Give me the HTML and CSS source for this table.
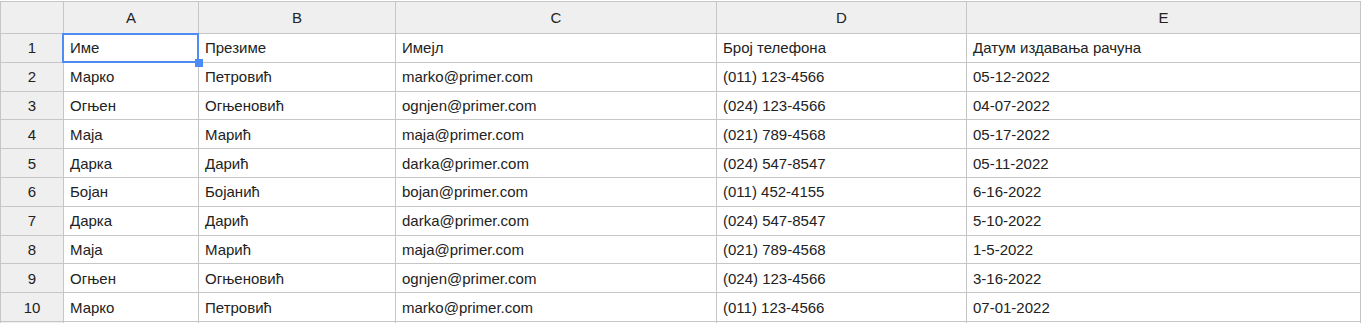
FILE: index.html
```html
<!DOCTYPE html>
<html lang="sr">
<head>
<meta charset="utf-8">
<title>Sheet</title>
<link rel="stylesheet" href="styles.css">
</head>
<body>
<div class="sheet">
  <div class="corner"></div>
  <div class="colhead">A</div>
  <div class="colhead">B</div>
  <div class="colhead">C</div>
  <div class="colhead">D</div>
  <div class="colhead">E</div>

  <div class="rowhead">1</div>
  <div class="cell selected">Име<span class="handle"></span></div>
  <div class="cell">Презиме</div>
  <div class="cell">Имејл</div>
  <div class="cell">Број телефона</div>
  <div class="cell">Датум издавања рачуна</div>

  <div class="rowhead">2</div>
  <div class="cell">Марко</div>
  <div class="cell">Петровић</div>
  <div class="cell">marko@primer.com</div>
  <div class="cell">(011) 123-4566</div>
  <div class="cell">05-12-2022</div>

  <div class="rowhead">3</div>
  <div class="cell">Огњен</div>
  <div class="cell">Огњеновић</div>
  <div class="cell">ognjen@primer.com</div>
  <div class="cell">(024) 123-4566</div>
  <div class="cell">04-07-2022</div>

  <div class="rowhead">4</div>
  <div class="cell">Маја</div>
  <div class="cell">Марић</div>
  <div class="cell">maja@primer.com</div>
  <div class="cell">(021) 789-4568</div>
  <div class="cell">05-17-2022</div>

  <div class="rowhead">5</div>
  <div class="cell">Дарка</div>
  <div class="cell">Дарић</div>
  <div class="cell">darka@primer.com</div>
  <div class="cell">(024) 547-8547</div>
  <div class="cell">05-11-2022</div>

  <div class="rowhead">6</div>
  <div class="cell">Бојан</div>
  <div class="cell">Бојанић</div>
  <div class="cell">bojan@primer.com</div>
  <div class="cell">(011) 452-4155</div>
  <div class="cell">6-16-2022</div>

  <div class="rowhead">7</div>
  <div class="cell">Дарка</div>
  <div class="cell">Дарић</div>
  <div class="cell">darka@primer.com</div>
  <div class="cell">(024) 547-8547</div>
  <div class="cell">5-10-2022</div>

  <div class="rowhead">8</div>
  <div class="cell">Маја</div>
  <div class="cell">Марић</div>
  <div class="cell">maja@primer.com</div>
  <div class="cell">(021) 789-4568</div>
  <div class="cell">1-5-2022</div>

  <div class="rowhead">9</div>
  <div class="cell">Огњен</div>
  <div class="cell">Огњеновић</div>
  <div class="cell">ognjen@primer.com</div>
  <div class="cell">(024) 123-4566</div>
  <div class="cell">3-16-2022</div>

  <div class="rowhead">10</div>
  <div class="cell">Марко</div>
  <div class="cell">Петровић</div>
  <div class="cell">marko@primer.com</div>
  <div class="cell">(011) 123-4566</div>
  <div class="cell">07-01-2022</div>

  <div class="rowhead"></div>
  <div class="cell"></div>
  <div class="cell"></div>
  <div class="cell"></div>
  <div class="cell"></div>
  <div class="cell"></div>
</div>
</body>
</html>
```

FILE: styles.css
```css
html, body {
  margin: 0;
  padding: 0;
  background: #ffffff;
  overflow: hidden;
}

body {
  padding-top: 1px;
  font-family: "Liberation Sans", Arial, sans-serif;
  font-size: 15px;
  color: #222222;
}

.sheet {
  display: grid;
  grid-template-columns: 63px 135px 197px 321px 250px 394px;
  grid-template-rows: 32px repeat(11, 28.8px);
  border-top: 1px solid #c6c6c6;
  border-left: 1px solid #c6c6c6;
  width: max-content;
}

.corner,
.colhead,
.rowhead,
.cell {
  box-sizing: border-box;
  border-right: 1px solid #c6c6c6;
  border-bottom: 1px solid #c6c6c6;
  white-space: nowrap;
  overflow: visible;
}

.corner,
.colhead,
.rowhead {
  background: #efefef;
  color: #222222;
  display: flex;
  align-items: center;
  justify-content: center;
}

.cell {
  display: flex;
  align-items: center;
  padding-left: 6px;
  background: #ffffff;
  position: relative;
}

.selected::after {
  content: "";
  position: absolute;
  left: -2px;
  top: -1px;
  right: -1px;
  bottom: -1px;
  border: 2px solid #4d8cf4;
  pointer-events: none;
}

.handle {
  position: absolute;
  right: -5px;
  bottom: -5px;
  width: 8px;
  height: 8px;
  background: #4d8cf4;
  z-index: 2;
}
```
